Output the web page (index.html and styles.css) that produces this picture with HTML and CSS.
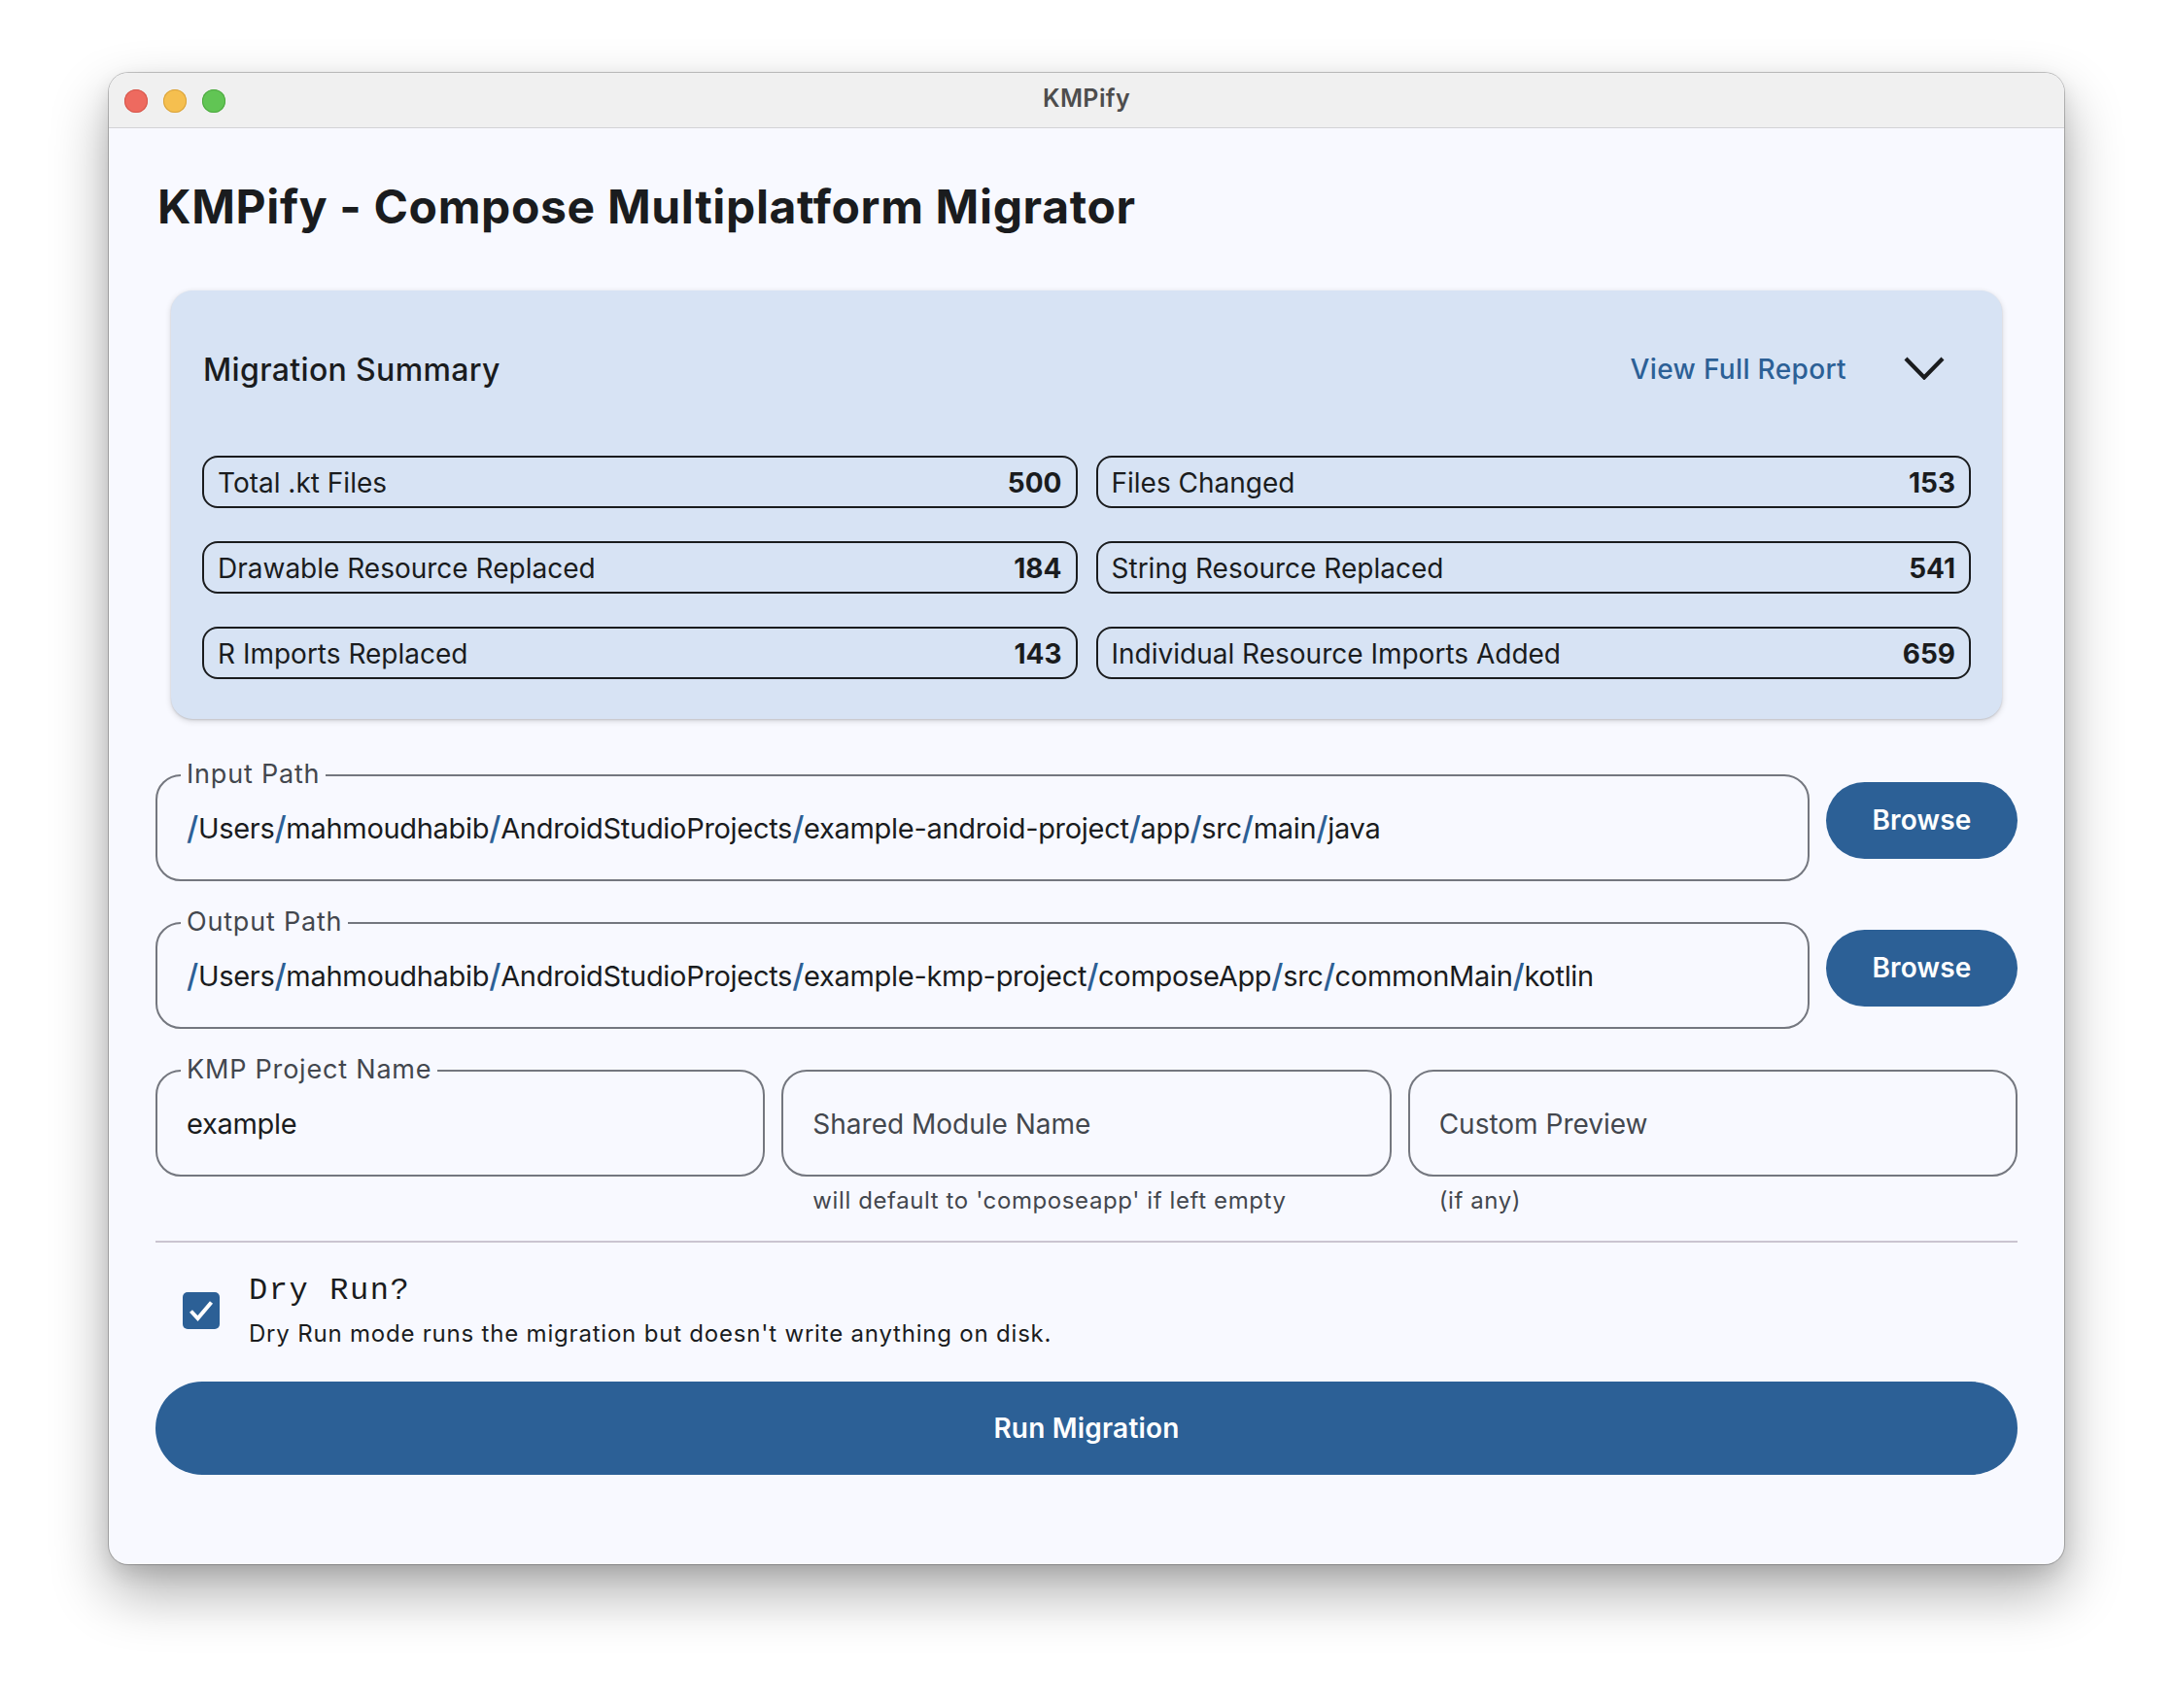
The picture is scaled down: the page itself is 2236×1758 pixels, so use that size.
FILE: index.html
```html
<!DOCTYPE html>
<html lang="en">
<head>
<meta charset="utf-8">
<title>KMPify</title>
<link rel="stylesheet" href="styles.css">
</head>
<body>
<div class="window">
  <div class="titlebar">
    <div class="lights">
      <span class="light red"></span>
      <span class="light yellow"></span>
      <span class="light green"></span>
    </div>
    <div class="win-title">KMPify</div>
  </div>
  <div class="content">
    <h1 class="heading">KMPify - Compose Multiplatform Migrator</h1>

    <section class="summary">
      <div class="summary-head">
        <h2 class="summary-title">Migration Summary</h2>
        <div class="summary-actions">
          <span class="text-btn">View Full Report</span>
          <span class="icon-btn">
            <svg width="42" height="24" viewBox="0 0 42 24"><polyline points="2,2 21,21.5 40,2" fill="none" stroke="#1a1c1e" stroke-width="4.2"/></svg>
          </span>
        </div>
      </div>
      <div class="stats">
        <div class="stat"><span class="stat-label">Total .kt Files</span><span class="stat-value">500</span></div>
        <div class="stat"><span class="stat-label">Files Changed</span><span class="stat-value">153</span></div>
        <div class="stat"><span class="stat-label">Drawable Resource Replaced</span><span class="stat-value">184</span></div>
        <div class="stat"><span class="stat-label">String Resource Replaced</span><span class="stat-value">541</span></div>
        <div class="stat"><span class="stat-label">R Imports Replaced</span><span class="stat-value">143</span></div>
        <div class="stat"><span class="stat-label">Individual Resource Imports Added</span><span class="stat-value">659</span></div>
      </div>
    </section>

    <div class="path-row first">
      <div class="field">
        <span class="field-label">Input Path</span>
        <span class="field-value"><span class="sep">/</span>Users<span class="sep">/</span>mahmoudhabib<span class="sep">/</span>AndroidStudioProjects<span class="sep">/</span>example-android-project<span class="sep">/</span>app<span class="sep">/</span>src<span class="sep">/</span>main<span class="sep">/</span>java</span>
      </div>
      <button class="btn browse">Browse</button>
    </div>

    <div class="path-row">
      <div class="field">
        <span class="field-label">Output Path</span>
        <span class="field-value"><span class="sep">/</span>Users<span class="sep">/</span>mahmoudhabib<span class="sep">/</span>AndroidStudioProjects<span class="sep">/</span>example-kmp-project<span class="sep">/</span>composeApp<span class="sep">/</span>src<span class="sep">/</span>commonMain<span class="sep">/</span>kotlin</span>
      </div>
      <button class="btn browse">Browse</button>
    </div>

    <div class="name-row">
      <div class="name-col">
        <div class="field">
          <span class="field-label">KMP Project Name</span>
          <span class="field-value">example</span>
        </div>
      </div>
      <div class="name-col">
        <div class="field">
          <span class="field-placeholder">Shared Module Name</span>
        </div>
        <div class="helper">will default to 'composeapp' if left empty</div>
      </div>
      <div class="name-col">
        <div class="field">
          <span class="field-placeholder">Custom Preview</span>
        </div>
        <div class="helper">(if any)</div>
      </div>
    </div>

    <hr class="divider">

    <div class="dry-run">
      <span class="checkbox">
        <svg width="38" height="38" viewBox="0 0 38 38"><polyline points="8.5,19.5 15.5,27 29.5,10.5" fill="none" stroke="#ffffff" stroke-width="4"/></svg>
      </span>
      <div class="dry-text">
        <div class="dry-title">Dry Run?</div>
        <div class="dry-desc">Dry Run mode runs the migration but doesn't write anything on disk.</div>
      </div>
    </div>

    <button class="btn run">Run Migration</button>
  </div>
</div>
</body>
</html>
```

FILE: styles.css
```css
* { box-sizing: border-box; }

html, body {
  margin: 0;
  padding: 0;
  background: #ffffff;
}

body {
  padding: 75px 112px 0 112px;
  font-family: Inter, "Noto Sans", "Liberation Sans", sans-serif;
  color: #1a1c1e;
  width: 2236px;
  height: 1758px;
  overflow: hidden;
}

.window {
  width: 2012px;
  background: #f8f9ff;
  border-radius: 20px;
  overflow: hidden;
  box-shadow: 0 0 0 1px rgba(0, 0, 0, 0.22), 0 28px 60px rgba(0, 0, 0, 0.33), 0 8px 20px rgba(0, 0, 0, 0.10);
}

.titlebar {
  height: 57px;
  background: #f0f0f0;
  border-bottom: 1px solid #d3d3d5;
  display: flex;
  align-items: center;
  position: relative;
}

.lights {
  display: flex;
  gap: 16px;
  padding-left: 16px;
  padding-top: 1px;
}

.light {
  width: 24px;
  height: 24px;
  border-radius: 50%;
  display: block;
}
.light.red { background: #ee6a5f; box-shadow: inset 0 0 0 1px #d5584d; }
.light.yellow { background: #f5bf4f; box-shadow: inset 0 0 0 1px #d9a33c; }
.light.green { background: #61c554; box-shadow: inset 0 0 0 1px #4ea940; }

.win-title {
  position: absolute;
  left: 0;
  right: 0;
  text-align: center;
  font-size: 25px;
  font-weight: 600;
  letter-spacing: 0.4px;
  color: #4d4d4d;
  pointer-events: none;
  top: 9px;
  line-height: 34px;
}

.content {
  padding: 48px 48px 92px 48px;
}

.heading {
  margin: 0;
  font-size: 48px;
  line-height: 64px;
  font-weight: 700;
  letter-spacing: 0.65px;
  color: #1a1c1e;
  padding-left: 2px;
  padding-top: 1px;
}

.summary {
  margin: 54px 16px 0 16px;
  background: #d7e3f4;
  border-radius: 22px;
  padding: 32px 32px 41px 32px;
  box-shadow: 0 2px 6px rgba(0, 0, 0, 0.16), 0 1px 2px rgba(0, 0, 0, 0.12);
}

.summary-head {
  height: 96px;
  display: flex;
  align-items: center;
  justify-content: space-between;
}

.summary-title {
  margin: 0;
  font-size: 32px;
  font-weight: 500;
  letter-spacing: 0.35px;
  line-height: 40px;
  color: #1a1c1e;
  padding-left: 1px;
  padding-top: 3px;
}

.summary-actions {
  display: flex;
  align-items: center;
  gap: 8px;
}

.text-btn {
  font-size: 28px;
  font-weight: 500;
  letter-spacing: 0.35px;
  color: #2c6096;
  padding: 2px 24px 0 24px;
  line-height: 80px;
}

.icon-btn {
  width: 96px;
  height: 96px;
  display: flex;
  align-items: center;
  justify-content: center;
}

.stats {
  margin-top: 42px;
  display: grid;
  grid-template-columns: 1fr 1fr;
  column-gap: 19px;
  row-gap: 34px;
}

.stat {
  height: 54px;
  border: 2.5px solid #1a1c1e;
  border-radius: 16px;
  display: flex;
  align-items: center;
  justify-content: space-between;
  padding: 1px 14px 0 14px;
  font-size: 28px;
}

.stat-label {
  font-weight: 400;
}

.stat-value {
  font-weight: 700;
}

.path-row {
  display: flex;
  align-items: center;
  gap: 17px;
  padding-top: 16px;
  margin-top: 26px;
}

.path-row.first {
  margin-top: 41px;
}

.field {
  position: relative;
  flex: 1;
  height: 110px;
  border: 2px solid #74777f;
  border-radius: 26px;
  display: flex;
  align-items: center;
  padding: 2px 30px 0 30px;
}

.field-label {
  position: absolute;
  top: -18px;
  left: 24px;
  padding: 0 6px;
  background: #f8f9ff;
  font-size: 27px;
  letter-spacing: 0.8px;
  line-height: 32px;
  color: #43474e;
}

.field-value {
  font-size: 29px;
  letter-spacing: -0.3px;
  color: #1a1c1e;
  white-space: nowrap;
  line-height: 40px;
}

.field-placeholder {
  font-size: 28px;
  color: #43474e;
}

.sep {
  color: #2c6096;
  font-weight: 500;
  font-size: 33px;
  line-height: 0;
  vertical-align: -1px;
}

.btn {
  border: none;
  font-family: inherit;
  background: #2c6096;
  color: #ffffff;
  font-weight: 600;
  font-size: 28px;
  letter-spacing: 0.2px;
  border-radius: 999px;
  cursor: pointer;
}

.browse {
  width: 197px;
  height: 79px;
  margin-top: -16px;
}

.name-row {
  margin-top: 26px;
  padding-top: 16px;
  display: grid;
  grid-template-columns: 1fr 1fr 1fr;
  column-gap: 17px;
  align-items: start;
}

.name-col .field {
  flex: none;
}

.helper {
  margin-top: 9px;
  line-height: 32px;
  font-size: 24px;
  letter-spacing: 0.6px;
  color: #43474e;
  padding-left: 32px;
}

.divider {
  margin: 25px 0 0 0;
  border: none;
  height: 2px;
  background: #cac4d0;
}

.dry-run {
  margin-top: 30px;
  display: flex;
  align-items: center;
  gap: 30px;
  padding-left: 28px;
}

.checkbox {
  width: 38px;
  height: 38px;
  border-radius: 5px;
  background: #2c6096;
  display: flex;
  align-items: center;
  justify-content: center;
}

.dry-title {
  font-family: "Liberation Mono", "DejaVu Sans Mono", monospace;
  font-size: 32px;
  line-height: 40px;
  letter-spacing: 1.6px;
  color: #1a1c1e;
}

.dry-desc {
  margin-top: 8px;
  font-size: 24px;
  line-height: 32px;
  letter-spacing: 0.8px;
  color: #1a1c1e;
}

.run {
  display: block;
  width: 100%;
  height: 96px;
  margin-top: 33px;
  font-size: 28px;
}
```
